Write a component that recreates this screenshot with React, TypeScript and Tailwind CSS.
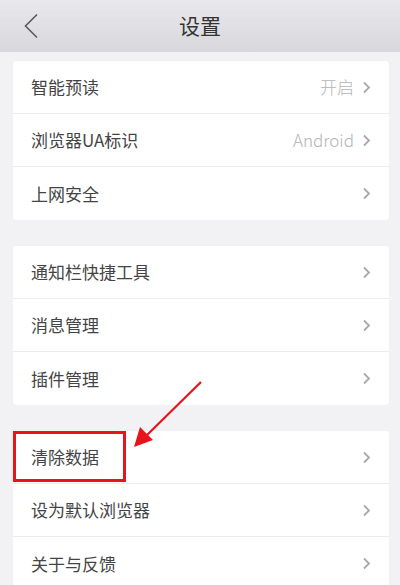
import React from "react"

type Row = { label: string; value?: string; highlight?: boolean }

const groups: Row[][] = [
  [
    { label: "智能预读", value: "开启" },
    { label: "浏览器UA标识", value: "Android" },
    { label: "上网安全" },
  ],
  [{ label: "通知栏快捷工具" }, { label: "消息管理" }, { label: "插件管理" }],
  [{ label: "清除数据", highlight: true }, { label: "设为默认浏览器" }, { label: "关于与反馈" }],
]

function Chevron() {
  return (
    <svg width="9" height="13" viewBox="0 0 9 13" className="shrink-0">
      <path d="M2 1.5 L7 6.5 L2 11.5" fill="none" stroke="#a9a9ad" strokeWidth="1.8" />
    </svg>
  )
}

function SettingRow({ row, last }: { row: Row; last: boolean }) {
  return (
    <div
      className={`relative flex h-[53px] items-center pl-[18px] pr-[18px] ${
        last ? "" : "border-b border-[#ececef]"
      }`}
    >
      <span className="flex-1 text-[17px] text-[#444446]">{row.label}</span>
      {row.value ? (
        <span className="mr-[8px] text-[17px] font-light text-[#b4b4b8]">{row.value}</span>
      ) : null}
      <Chevron />
      {row.highlight ? (
        <div className="absolute left-0 top-0 h-[51px] w-[113px] border-[3px] border-[#e8141c]" />
      ) : null}
    </div>
  )
}

export default function App() {
  return (
    <div
      className="relative h-[585px] w-[400px] overflow-hidden bg-[#f2f2f5]"
      style={{ fontFamily: '"Noto Sans CJK SC", "Noto Sans", sans-serif' }}
    >
      <header className="relative flex h-[52px] items-center justify-center bg-gradient-to-b from-[#e9e9ed] to-[#d8d8dc]">
        <svg width="16" height="26" viewBox="0 0 16 26" className="absolute left-[23px] top-[13px]">
          <path d="M14 1.5 L2.5 13 L14 24.5" fill="none" stroke="#5a5a5e" strokeWidth="1.6" />
        </svg>
        <h1 className="text-[21px] text-[#333]">设置</h1>
      </header>

      <div className="flex flex-col gap-[26px] px-[13px] pt-[9px] pr-[11px]">
        {groups.map((g, i) => (
          <div key={i} className="rounded-[3px] bg-white shadow-[0_0_1px_rgba(0,0,0,0.06)]">
            {g.map((r, j) => (
              <SettingRow key={r.label} row={r} last={j === g.length - 1} />
            ))}
          </div>
        ))}
      </div>

      {/* annotation arrow */}
      <svg width="400" height="585" className="pointer-events-none absolute left-0 top-0">
        <line x1="201" y1="382" x2="146" y2="436" stroke="#e8141c" strokeWidth="2.2" />
        <polygon points="134,447 140,427 153,440" fill="#e8141c" />
      </svg>
    </div>
  )
}
